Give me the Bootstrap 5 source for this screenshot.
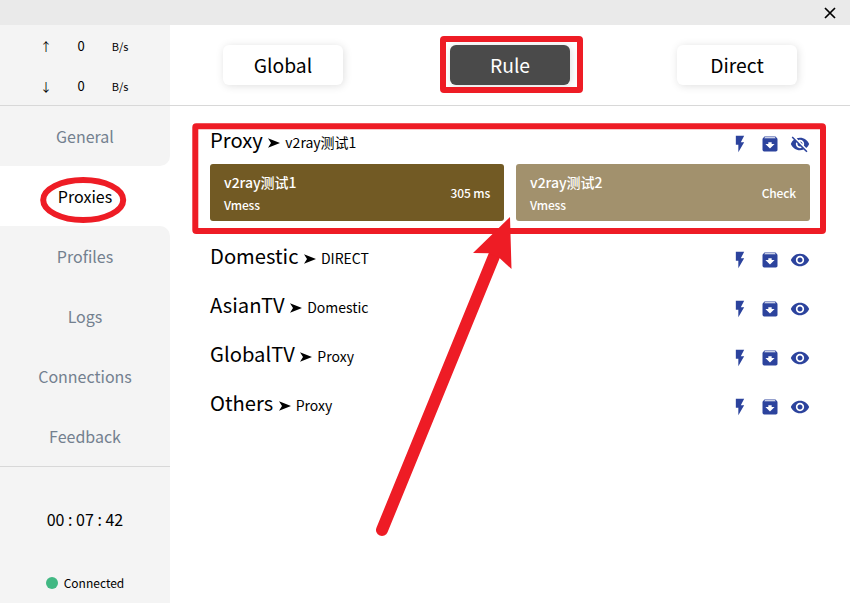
<!DOCTYPE html>
<html lang="en">
<head>
<meta charset="utf-8">
<meta name="viewport" content="width=device-width, initial-scale=1">
<title>Proxies</title>
<link href="https://cdn.jsdelivr.net/npm/bootstrap@5.3.0/dist/css/bootstrap.min.css" rel="stylesheet">
<style>
  body { font-family: "Noto Sans CJK SC", sans-serif; color: #000; width: 850px; height: 603px; overflow: hidden; line-height: 1.5; }
  .titlebar { height: 25px; background: #eaeaea; padding-right: 13px; }
  .close-btn { line-height: 0; }
  .window-body { height: 578px; }
  .side { width: 170px; }
  .traffic { height: 81px; background: #f4f4f4; border-bottom: 1px solid #d8d8d8; }
  .traffic-row { height: 40px; padding: 2px 0 0 38px; }
  .traffic-row span { text-align: center; line-height: 40px; }
  .traffic-row .dir { width: 16px; font-size: 12px; padding-top: 2px; }
  .amount { width: 54px; font-size: 13px; }
  .unit { width: 24px; font-size: 11px; }
  .side-link { height: 60px; line-height: 60px; padding: 0; font-size: 16px; text-align: center; color: #73808f; background: #f4f4f4; border-radius: 0; }
  .side .side-link.active { color: #000; background: #fff; }
  .before-active { border-bottom-right-radius: 10px; }
  .after-active { border-top-right-radius: 10px; }
  .side-foot { background: #f4f4f4; border-top: 1px solid #d8d8d8; }
  .clock { font-size: 16px; line-height: 24px; margin-top: 40px; }
  .status { font-size: 12px; line-height: 20px; margin-bottom: 10px; gap: 6px; }
  .dot { width: 12px; height: 12px; background: #41b883; }
  .modes { height: 81px; padding: 0 53px; border-bottom: 1px solid #d8d8d8; }
  .mode-btn { width: 120px; height: 40px; padding: 0; line-height: 40px; font-size: 19.300px; border-radius: 6px; color: #000; background: #fff; border: 0; box-shadow: 1px 1px 8px rgba(0,0,0,.13); }
  .mode-btn.chosen { color: #fff; background: #4a4a4a; }
  .groups { padding: 19px 40px 0; }
  .group-head { height: 30px; margin-bottom: 19px; }
  .group-name { font-size: 20.200px; line-height: 30px; }
  .group-pick { font-size: 14px; }
  .group-arrow { width: 12px; height: 10px; margin: 0 5px 0 5.500px; }
  .tools { gap: 10px; padding-top: 9px; color: #2c439d; }
  .tools svg { width: 20px; height: 20px; fill: currentColor; }
  .nodes { gap: 12px; margin: -10px 0 20px; }
  .node { height: 57px; padding: 0 14px; border-radius: 3px; color: #fff; font-weight: 500; background: #a2916d; }
  .node.picked { background: #725a24; }
  .node-text { padding-top: 2px; }
  .node-name { font-size: 14px; line-height: 22px; }
  .node-kind, .node-delay { font-size: 12px; line-height: 22px; letter-spacing: -.15px; }
  .node-kind { padding-top: 1px; }
  .marks { left: 0; top: 0; pointer-events: none; }
</style>
<script src="https://cdn.jsdelivr.net/npm/bootstrap@5.3.0/dist/js/bootstrap.bundle.min.js"></script>
</head>
<body class="position-relative bg-white">
<svg class="d-none">
  <symbol id="bolt" viewBox="0 0 24 24"><path d="M7 2v11h3v9l7-12h-4l4-8z"/></symbol>
  <symbol id="archive" viewBox="0 0 24 24"><path d="M20.54 5.23l-1.39-1.68C18.88 3.21 18.47 3 18 3H6c-.47 0-.88.21-1.16.55L3.46 5.23C3.17 5.57 3 6.02 3 6.5V19c0 1.1.9 2 2 2h14c1.1 0 2-.9 2-2V6.500c0-.48-.17-.93-.46-1.270zM12 17.500L6.500 12H10v-2h4v2h3.500L12 17.500zM5.120 5l.81-1h12l.94 1H5.120z"/></symbol>
  <symbol id="eye" viewBox="0 0 24 24"><path d="M12 4.500C7 4.500 2.730 7.610 1 12c1.730 4.390 6 7.500 11 7.500s9.270-3.110 11-7.500c-1.730-4.390-6-7.500-11-7.500zM12 17c-2.760 0-5-2.240-5-5s2.240-5 5-5 5 2.240 5 5-2.240 5-5 5zm0-8c-1.660 0-3 1.340-3 3s1.340 3 3 3 3-1.340 3-3-1.340-3-3-3z"/></symbol>
  <symbol id="eye-off" viewBox="0 0 24 24"><path d="M12 7c2.760 0 5 2.240 5 5 0 .65-.13 1.260-.36 1.830l2.920 2.920c1.510-1.260 2.700-2.890 3.430-4.750-1.730-4.390-6-7.500-11-7.500-1.400 0-2.740.25-3.980.7l2.160 2.160C10.740 7.130 11.350 7 12 7zM2 4.270l2.280 2.280.46.46C3.080 8.300 1.780 10.020 1 12c1.730 4.390 6 7.500 11 7.500 1.550 0 3.030-.3 4.380-.84l.42.42L19.730 22 21 20.730 3.270 3 2 4.270zM7.530 9.800l1.550 1.550c-.05.21-.08.43-.08.65 0 1.660 1.340 3 3 3 .22 0 .44-.03.65-.08l1.550 1.550c-.67.33-1.410.53-2.200.53-2.760 0-5-2.240-5-5 0-.79.2-1.530.53-2.200zm4.310-.78l3.150 3.150.02-.16c0-1.660-1.340-3-3-3l-.17.01z"/></symbol>
  <symbol id="pointer" viewBox="0 0 12 10"><path d="M0 .3L12 5 0 9.700 3 5z"/></symbol>
</svg>

<header class="titlebar d-flex align-items-center justify-content-end">
  <span class="close-btn" role="button" aria-label="Close"><svg width="14" height="14" viewBox="0 0 14 14"><path d="M2 2l10 10M12 2L2 12" stroke="#000" stroke-width="1.700"/></svg></span>
</header>

<div class="window-body d-flex">
  <aside class="side d-flex flex-column flex-shrink-0">
    <div class="traffic">
      <div class="traffic-row d-flex align-items-center"><span class="dir">↑</span><span class="amount">0</span><span class="unit">B/s</span></div>
      <div class="traffic-row d-flex align-items-center"><span class="dir">↓</span><span class="amount">0</span><span class="unit">B/s</span></div>
    </div>
    <nav class="nav flex-column">
      <a class="nav-link side-link before-active">General</a>
      <a class="nav-link side-link active">Proxies</a>
      <a class="nav-link side-link after-active">Profiles</a>
      <a class="nav-link side-link">Logs</a>
      <a class="nav-link side-link">Connections</a>
      <a class="nav-link side-link">Feedback</a>
    </nav>
    <div class="side-foot flex-grow-1 d-flex flex-column align-items-center justify-content-between">
      <div class="clock">00 : 07 : 42</div>
      <div class="status d-flex align-items-center"><span class="dot rounded-circle"></span><span class="status-text">Connected</span></div>
    </div>
  </aside>

  <main class="flex-grow-1">
    <div class="modes d-flex align-items-center justify-content-between">
      <button class="btn mode-btn">Global</button>
      <button class="btn mode-btn chosen">Rule</button>
      <button class="btn mode-btn">Direct</button>
    </div>
    <div class="groups">
      <div class="group-head d-flex justify-content-between">
        <div class="d-flex align-items-baseline"><span class="group-name">Proxy</span><svg class="group-arrow"><use href="#pointer"/></svg><span class="group-pick">v2ray测试1</span></div>
        <div class="tools d-flex"><svg><use href="#bolt"/></svg><svg><use href="#archive"/></svg><svg><use href="#eye-off"/></svg></div>
      </div>
      <div class="nodes d-flex">
        <div class="node picked flex-fill w-50 d-flex align-items-center justify-content-between">
          <div class="node-text"><div class="node-name">v2ray测试1</div><div class="node-kind">Vmess</div></div><span class="node-delay">305 ms</span>
        </div>
        <div class="node flex-fill w-50 d-flex align-items-center justify-content-between">
          <div class="node-text"><div class="node-name">v2ray测试2</div><div class="node-kind">Vmess</div></div><span class="node-delay">Check</span>
        </div>
      </div>
      <div class="group-head d-flex justify-content-between">
        <div class="d-flex align-items-baseline"><span class="group-name">Domestic</span><svg class="group-arrow"><use href="#pointer"/></svg><span class="group-pick">DIRECT</span></div>
        <div class="tools d-flex"><svg><use href="#bolt"/></svg><svg><use href="#archive"/></svg><svg><use href="#eye"/></svg></div>
      </div>
      <div class="group-head d-flex justify-content-between">
        <div class="d-flex align-items-baseline"><span class="group-name">AsianTV</span><svg class="group-arrow"><use href="#pointer"/></svg><span class="group-pick">Domestic</span></div>
        <div class="tools d-flex"><svg><use href="#bolt"/></svg><svg><use href="#archive"/></svg><svg><use href="#eye"/></svg></div>
      </div>
      <div class="group-head d-flex justify-content-between">
        <div class="d-flex align-items-baseline"><span class="group-name">GlobalTV</span><svg class="group-arrow"><use href="#pointer"/></svg><span class="group-pick">Proxy</span></div>
        <div class="tools d-flex"><svg><use href="#bolt"/></svg><svg><use href="#archive"/></svg><svg><use href="#eye"/></svg></div>
      </div>
      <div class="group-head d-flex justify-content-between">
        <div class="d-flex align-items-baseline"><span class="group-name">Others</span><svg class="group-arrow"><use href="#pointer"/></svg><span class="group-pick">Proxy</span></div>
        <div class="tools d-flex"><svg><use href="#bolt"/></svg><svg><use href="#archive"/></svg><svg><use href="#eye"/></svg></div>
      </div>
    </div>
  </main>
</div>

<!-- Red annotations over the window -->
<svg class="marks position-absolute" width="850" height="603" fill="none" stroke="#ee1c25" stroke-width="6">
  <rect x="443" y="39" width="137" height="51" rx="1"/>
  <rect x="195.300" y="126.300" width="627.700" height="104.700" rx="1"/>
  <ellipse cx="83.200" cy="200" rx="40" ry="20"/>
  <path d="M382 530L494.500 255" stroke-width="12" stroke-linecap="round"/>
  <path d="M510 217L473 253 489 253.300 499.500 258 511.500 269z" fill="#ee1c25" stroke="none"/>
</svg>
</body>
</html>
